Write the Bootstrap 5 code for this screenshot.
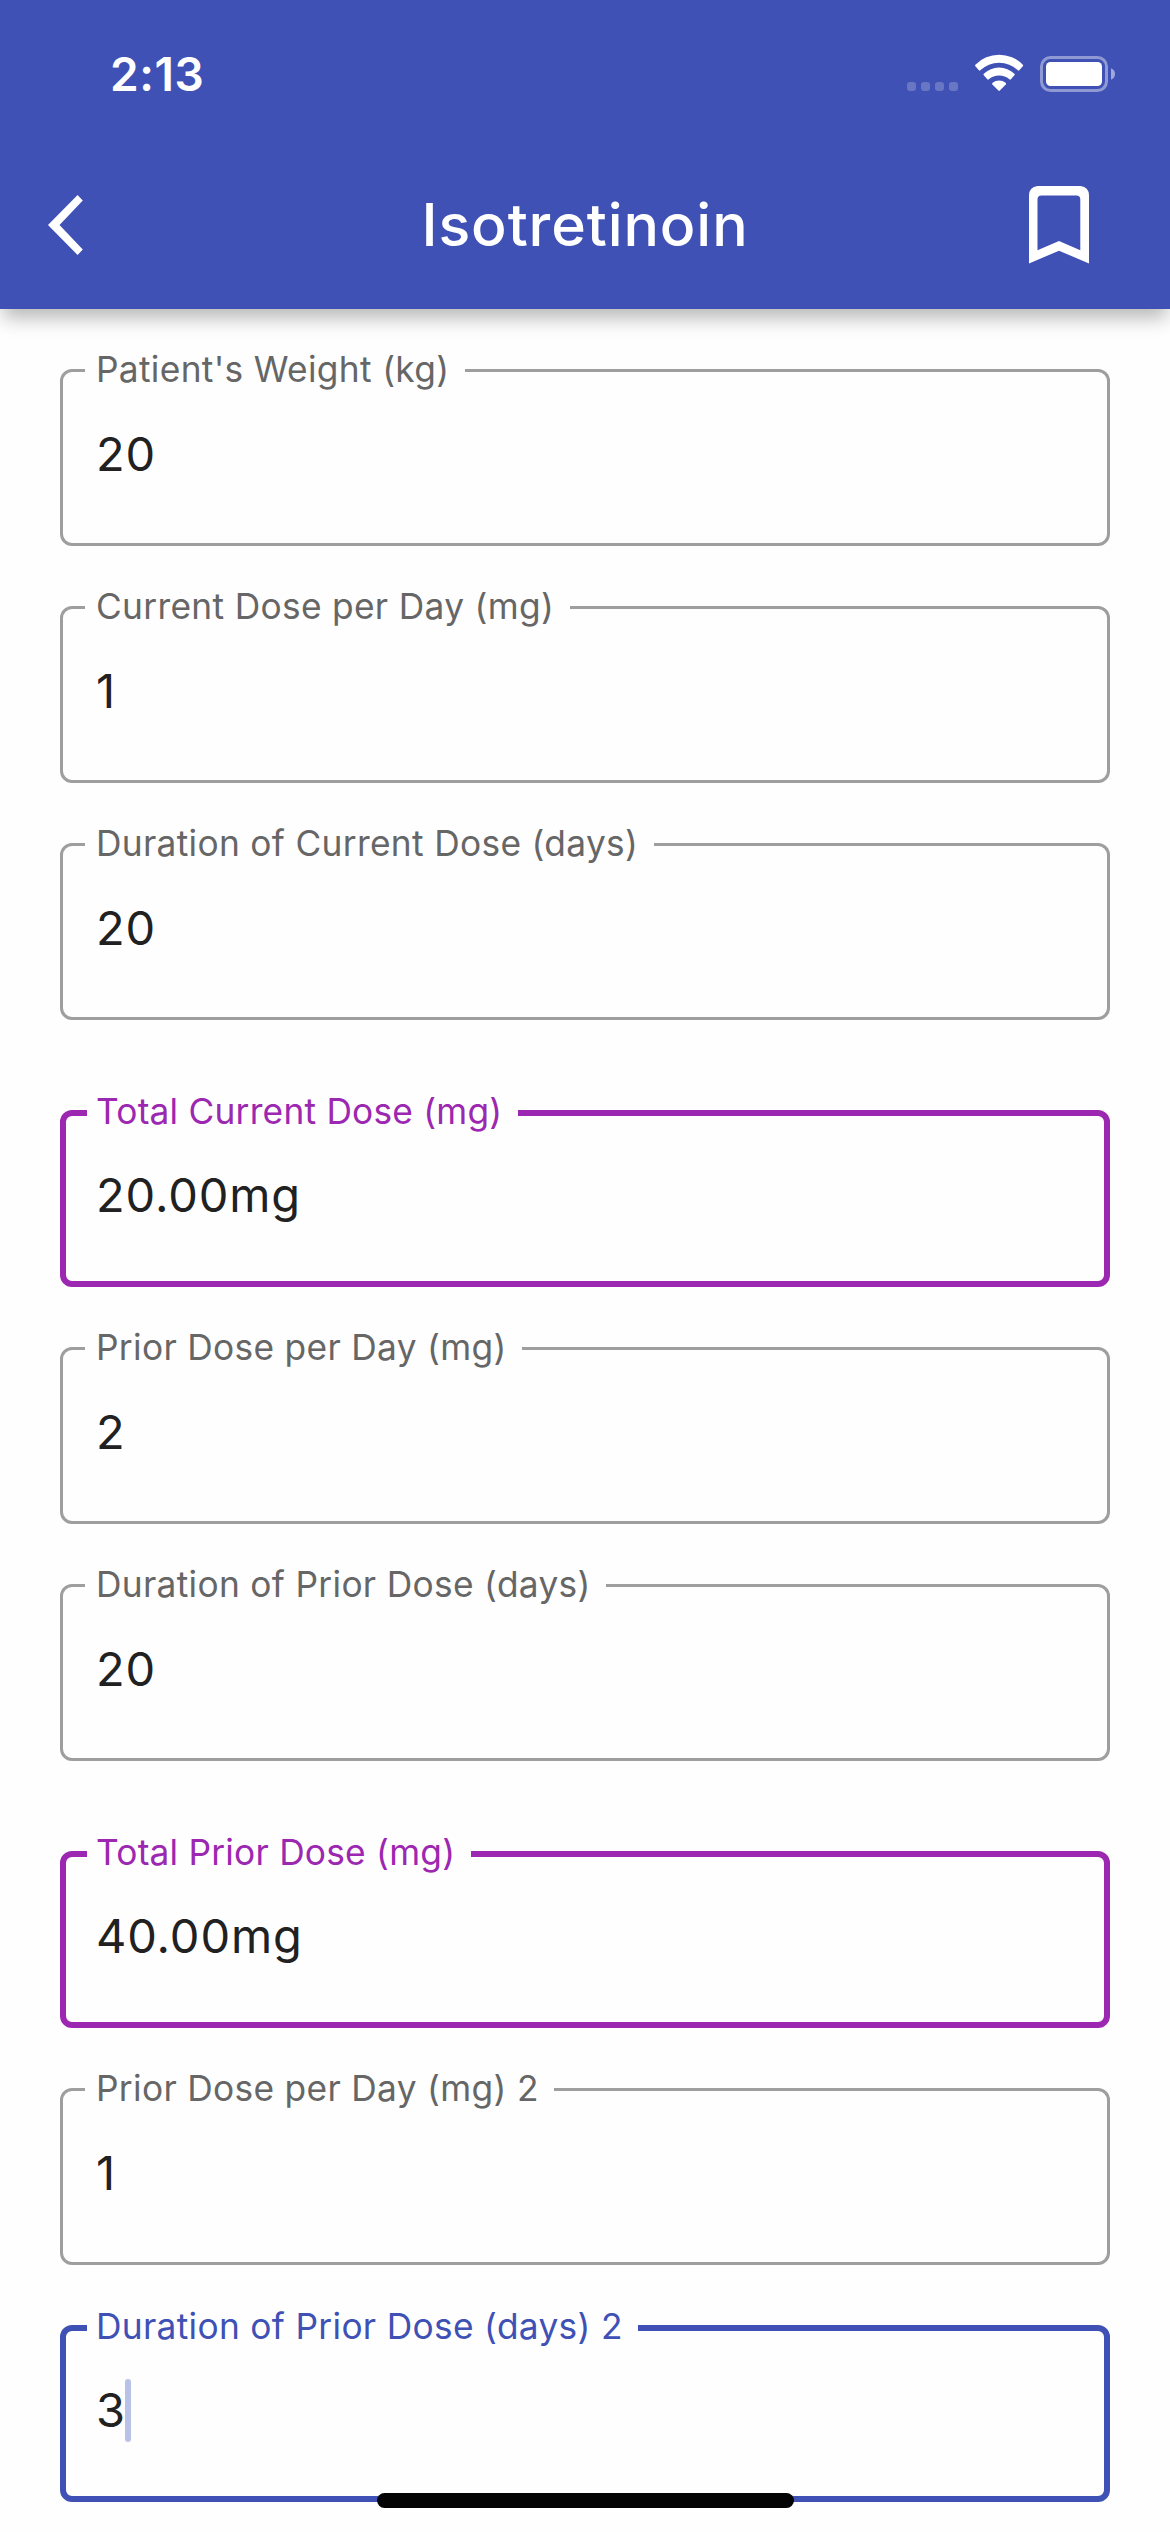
<!DOCTYPE html>
<html lang="en">
<head>
<meta charset="utf-8">
<meta name="viewport" content="width=device-width, initial-scale=1">
<title>Isotretinoin</title>
<link href="https://cdn.jsdelivr.net/npm/bootstrap@5.3.0/dist/css/bootstrap.min.css" rel="stylesheet">
<style>
  :root { --indigo: #3f51b5; --accent: #9c27b0; --outline: #9e9e9e; }
  body { font-family: Inter, "Liberation Sans", sans-serif; background: #fefefe; color: #212121; }
  .screen { width: 1170px; height: 2532px; }
  .app-head { height: 309px; background: var(--indigo); box-shadow: 0 12px 18px -3px rgba(0,0,0,.28); z-index: 2; }
  .status-row { height: 141px; padding: 7px 55px 0 110px; }
  .clock { font-size: 46px; font-weight: 600; letter-spacing: .57px; line-height: 60px; }
  .title-row { height: 168px; padding: 0 81px 0 48px; }
  .side-l { width: 93px; }
  .side-r { width: 60px; }
  .page-title { font-size: 59px; font-weight: 500; letter-spacing: .89px; line-height: 80px; }
  .form-area { padding: 39px 60px 0; gap: 39px; }
  .outlined { height: 198px; border: 3px solid var(--outline); border-radius: 12px; padding: 0 33px; }
  .outlined > legend { float: none; width: auto; height: 45px; margin: 0 0 0 -11px; padding: 0 15.5px 0 11px;
    font-size: 35.3px; line-height: 43px; letter-spacing: .32px; color: #666; white-space: nowrap; }
  .outlined .entry { padding-top: 31px; font-size: 47px; line-height: 60px; letter-spacing: .9px; }
  .outlined.thick { height: 197px; border-width: 6px; padding: 0 30px; }
  .outlined.thick > legend { height: 46px; line-height: 44px; margin-left: -9px; padding-left: 9px; }
  .outlined.thick .entry { padding-top: 29px; }
  .outlined.total { border-color: var(--accent); margin-top: 31px; }
  .outlined.total > legend { color: var(--accent); letter-spacing: .22px; }
  .outlined.active { border-color: var(--indigo); margin-top: 1px; }
  .outlined.active > legend { color: var(--indigo); }
  .caret { width: 6px; height: 63px; border-radius: 3px; background: #bac1e6; margin: -1px 0 0 -1px; }
  .home-bar { width: 417px; height: 15px; border-radius: 8px; background: #040404; bottom: 24px; left: 377px; z-index: 3; }
</style>
<script src="https://cdn.jsdelivr.net/npm/bootstrap@5.3.0/dist/js/bootstrap.bundle.min.js"></script>
</head>
<body>
<div class="screen position-relative overflow-hidden d-flex flex-column">
  <header class="app-head position-relative text-white flex-shrink-0">
    <div class="status-row d-flex align-items-center justify-content-between">
      <span class="clock">2:13</span>
      <svg width="208" height="40" viewBox="907 54 208 40" fill="#fff" aria-hidden="true">
        <g opacity=".21"><rect x="907" y="82" width="9" height="9" rx="3"/><rect x="921" y="82" width="9" height="9" rx="3"/><rect x="935" y="82" width="9" height="9" rx="3"/><rect x="949" y="82" width="9" height="9" rx="3"/></g>
        <path d="M975.4 66.3Q974.6 65.5 975.4 64.7A33 33 0 0 1 1022.8 64.7Q1023.6 65.5 1022.8 66.3L1019.3 70.2Q1018.6 71 1017.9 70.3A27.3 27.3 0 0 0 980.3 70.3Q979.6 71 978.9 70.2Z"/>
        <path d="M983.8 75.3Q983 74.5 983.8 73.8A21.8 21.8 0 0 1 1014.4 73.8Q1015.2 74.5 1014.4 75.3L1010.9 79.2Q1010.1 80 1009.4 79.3A16 16 0 0 0 988.8 79.3Q988.1 80 987.3 79.2Z"/>
        <path d="M992.4 84.4Q991.7 83.6 992.6 82.8A10 10 0 0 1 1005.6 82.8Q1006.5 83.6 1005.8 84.4L999.8 90.6Q999.1 91.2 998.4 90.6Z"/>
        <rect x="1041.5" y="57.5" width="65" height="33" rx="9" fill="none" stroke="#fff" stroke-width="3" opacity=".42"/>
        <rect x="1046" y="62" width="56" height="24" rx="4.5"/>
        <path d="M1111 68.3Q1115 70 1115 74T1111 79.8Z" opacity=".5"/>
      </svg>
    </div>
    <div class="title-row d-flex align-items-center justify-content-between">
      <div class="side-l d-flex"><svg width="36" height="60" viewBox="48 195 36 60" fill="#fff" aria-label="Back"><path d="M77.6 195L82.8 200.5L59.5 225L82.8 249.5L77.6 255L48 225Z"/></svg></div>
      <h1 class="page-title m-0">Isotretinoin</h1>
      <div class="side-r d-flex"><svg width="60" height="78" viewBox="1029 186 60 78" fill="#fff" fill-rule="evenodd" aria-label="Bookmark"><path d="M1037.5 186H1080.5Q1089 187 1089 195.5V263.5L1059 250.7L1029 263.5V195.5Q1029 187 1037.5 186ZM1041.5 195.5Q1037.5 195.5 1037.5 199.5V250.3L1059 241L1080.3 250.3V199.5Q1080.3 195.5 1076.3 195.5Z"/></svg></div>
    </div>
  </header>

  <main class="form-area d-flex flex-column">
    <fieldset class="outlined"><legend>Patient's Weight (kg)</legend><div class="entry">20</div></fieldset>
    <fieldset class="outlined"><legend>Current Dose per Day (mg)</legend><div class="entry">1</div></fieldset>
    <fieldset class="outlined"><legend>Duration of Current Dose (days)</legend><div class="entry">20</div></fieldset>
    <fieldset class="outlined thick total"><legend>Total Current Dose (mg)</legend><div class="entry">20.00mg</div></fieldset>
    <fieldset class="outlined"><legend>Prior Dose per Day (mg)</legend><div class="entry">2</div></fieldset>
    <fieldset class="outlined"><legend>Duration of Prior Dose (days)</legend><div class="entry">20</div></fieldset>
    <fieldset class="outlined thick total"><legend>Total Prior Dose (mg)</legend><div class="entry">40.00mg</div></fieldset>
    <fieldset class="outlined"><legend>Prior Dose per Day (mg) 2</legend><div class="entry">1</div></fieldset>
    <fieldset class="outlined thick active"><legend>Duration of Prior Dose (days) 2</legend><div class="entry d-flex align-items-start">3<span class="caret"></span></div></fieldset>
  </main>
  <div class="home-bar position-absolute"></div>
</div>
</body>
</html>
